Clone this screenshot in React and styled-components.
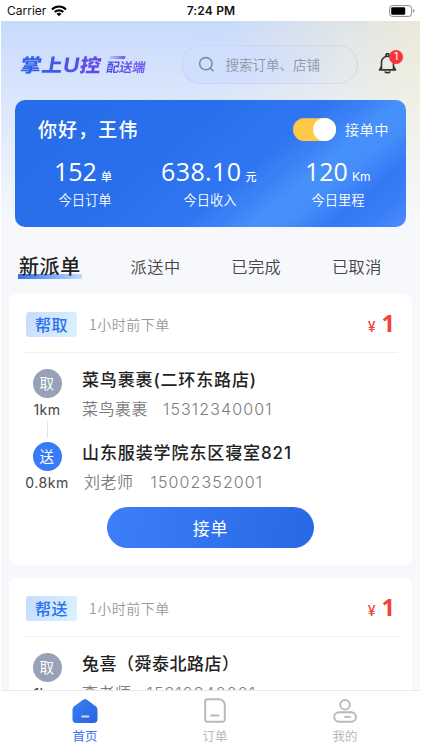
import React from 'react';
import styled, { createGlobalStyle, css } from 'styled-components';

const cjk = '"Noto Sans CJK SC", sans-serif';
const latin = 'Inter, "Noto Sans CJK SC", sans-serif';

const GlobalStyle = createGlobalStyle`
  * { box-sizing: border-box; }
  body { margin: 0; background: #fff; font-family: ${cjk}; overflow: hidden; }
  button { font: inherit; border: 0; padding: 0; background: none; }
`;

const Screen = styled.div`
  width: 422px; height: 750px; padding: 0 2px 0 1px;
  display: flex; flex-direction: column; overflow: hidden; background: #fff;
`;
const StatusBar = styled.header`
  height: 21px; flex: none; padding: 0 5px 0 6px;
  display: grid; grid-template-columns: 1fr auto 1fr; align-items: center;
  font: 400 12px/21px Inter, sans-serif; color: #111;
`;
const Carrier = styled.div`display: flex; align-items: center; gap: 5px; svg { display: block; }`;
const Clock = styled.div`font-weight: 600; letter-spacing: 0.18px;`;
const Battery = styled.svg`display: block; justify-self: end;`;

const Content = styled.main`
  flex: 1; min-height: 0; overflow: hidden; background:
    linear-gradient(180deg, rgba(246,248,251,0) 0, rgba(246,248,251,.1) 20px, rgba(246,248,251,.5) 95px, #f6f8fb 205px),
    linear-gradient(97deg, #c8dafd 0%, #c8dafc 45%, #e0e5e5 70%, #eeead3 88%, #efebd5 100%);
`;
const TopBar = styled.div`
  height: 79px; padding: 7px 14px 0 20px; display: flex; align-items: center;
`;
const Logo = styled.div`display: flex; width: 160px; height: 26px; align-items: center;`;
const gradientText = css`
  background: linear-gradient(90deg, ${p => p.$from}, ${p => p.$to});
  -webkit-background-clip: text; background-clip: text; color: transparent;
`;
const LogoName = styled.span`
  ${gradientText}
  flex: none; font-weight: 800; font-size: 18.5px; line-height: 26px; width: 75px;
  white-space: nowrap; transform: skewX(-10deg) scaleX(1.13); transform-origin: 0 50%; letter-spacing: .3px;
  b { font: 700 20px/20px Inter, sans-serif; }
`;
const LogoSide = styled.span`
  display: flex; flex-direction: column; transform: skewX(-10deg); margin-left: 11px;
`;
const LogoDash = styled.i`
  width: 16px; height: 3px; margin: 1px 0 0 1px;
  background: linear-gradient(90deg, #c2c9fb, #6c5af0);
`;
const LogoSub = styled.span`
  ${gradientText}
  font-weight: 700; font-size: 13px; line-height: 15px; white-space: nowrap;
`;
const Search = styled.div`
  width: 178px; height: 39px; border-radius: 20px; border: 1px solid rgba(185,195,220,.34);
  display: flex; align-items: center; padding-left: 16px; gap: 11px;
  background: linear-gradient(90deg, #cfdefd, rgba(207,222,253,.85) 35%, rgba(225,230,235,.15) 90%);
  color: #8d97a4; font-size: 13.5px; font-weight: 350; line-height: 20px;
`;
const BellBox = styled.div`
  margin-left: 20px; width: 28px; height: 30px; position: relative;
  svg { position: absolute; left: 0; top: 4px; }
`;
const Count = styled.span`
  position: absolute; left: 11px; top: 1px; width: 14px; height: 14px; border-radius: 50%;
  background: #fa3439; color: #fff; text-align: center; font: 400 10.5px/14px Inter, sans-serif;
`;

const Summary = styled.section`
  margin: 0 14px; height: 127px; border-radius: 10px; color: #fff; overflow: hidden;
  background: linear-gradient(140deg, #276de9 0%, #296fec 38%, #2f74f0 52%, #2f74f0 57%, #3b81f6 65%, #4690fa 71%, #468ffa 77%, #3478f5 86%, #397df7 92%, #4d8bfc 100%);
`;
const Greeting = styled.div`
  height: 41px; padding: 18px 17px 0 23px; display: flex; align-items: center;
`;
const Hello = styled.h1`margin: -2px 0 0; flex: 1; font-size: 19px; line-height: 22px; font-weight: 500; letter-spacing: 1.1px;`;
const Toggle = styled.span`
  width: 43px; height: 23px; border-radius: 12px; background: #fec849; margin-right: 9px;
  display: flex; justify-content: flex-end; align-items: center; box-shadow: inset 0 1px 1px #d2b66c;
  &::after { content: ''; width: 23px; height: 23px; border-radius: 50%; background: #fff; }
`;
const ToggleLabel = styled.span`font-size: 14.2px; line-height: 22px; letter-spacing: .5px; font-weight: 350; margin-top: -1px;`;
const Stats = styled.div`
  margin-top: 12px; display: grid; grid-template-columns: 131px 129px 130px;
`;
const Stat = styled.div`
  height: 60px; display: flex; flex-direction: column; padding-left: ${p => p.$pad}px; position: relative;
  & + &::before {
    content: ''; position: absolute; left: 0; top: 19px; width: 1px; height: 19px; background: rgba(255,255,255,.24);
  }
`;
const Figure = styled.div`
  height: 36px; display: flex; align-items: baseline; gap: 4px; line-height: 37px;
  font-family: "Open Sans", sans-serif; font-weight: 500; font-size: 25px; letter-spacing: ${p => p.$track || 0}px;
`;
const Unit = styled.span`font: ${p => (p.$latin ? '400 12px/20px Inter' : '500 11px/20px "Noto Sans CJK SC"')}, sans-serif; letter-spacing: 0;`;
const StatLabel = styled.div`
  font-size: 13.3px; line-height: 20px; font-weight: 350; width: 58px; text-align: center; white-space: nowrap;
  margin-left: ${p => p.$shift}px; margin-top: 1px;
`;

const Tabs = styled.nav`
  height: 67px; padding: 11px 38px 0 18px; display: flex; justify-content: space-between; align-items: center;
`;
const Tab = styled.button`
  color: #454545; font-size: 16.2px; line-height: 26px; letter-spacing: .5px; font-weight: 350;
  ${p => p.$active && css`
    font-size: 20px; font-weight: 500; color: #222; width: 64px; text-align: left; margin: 0 -2px 0 -1px; padding-left: 1px; letter-spacing: .6px;
    background: linear-gradient(90deg, #3470ec, #79a6f8 50%, #c6dafa) 0 21px / 64px 5px no-repeat;
  `}
`;

const Card = styled.article`
  margin: 0 8px 13.5px; height: 270.5px; border-radius: 8px; background: #fff; padding: 0 14px 0 15px;
`;
const CardHead = styled.div`
  height: 59px; border-bottom: 1px solid #f0f0f2; padding: 3px 3px 0 2px; display: flex; align-items: center;
`;
const Tag = styled.span`
  width: 51px; height: 25px; border-radius: 3px; text-align: center; color: #2b73ee; font-size: 16px; line-height: 24px; font-weight: 500; letter-spacing: .4px;
  background: linear-gradient(110deg, #c8dcfd, #dbf2fe);
`;
const Ago = styled.span`margin: -1px 0 0 12px; flex: 1; color: #999; font-size: 14px; font-weight: 350; letter-spacing: .5px; line-height: 22px;`;
const Price = styled.span`
  display: flex; align-items: baseline; gap: 6px; color: #f0443d; font: 700 23.5px/28px "Noto Sans", sans-serif; margin-top: -4px;
  small { font: 500 14px/20px Inter, sans-serif; }
`;
const Stop = styled.div`
  height: ${p => (p.$last ? 72 : 73)}px; display: grid; grid-template-columns: 58px 1fr;
`;
const Marker = styled.div`
  width: 46px; display: flex; flex-direction: column; align-items: center;
  font: 400 14px/18px Inter, sans-serif; color: #444; padding-top: 16px; white-space: nowrap; letter-spacing: .5px;
`;
const Dot = styled.span`
  width: 29px; height: 29px; flex: none; border-radius: 50%; background: ${p => (p.$drop ? '#397bf7' : '#97a2b8')};
  color: #fff; font: 400 14.5px/28px ${cjk}; text-align: center; margin-bottom: 3px;
`;
const Link = styled.i`width: 1px; height: 17px; flex: none; background: #e4e4e8; margin-top: 2px;`;
const Place = styled.div`padding-top: 14px; white-space: nowrap;`;
const PlaceName = styled.h2`
  margin: 0; color: #222; font: 500 17px/27px ${latin}; letter-spacing: ${p => p.$track}px;
`;
const Contact = styled.p`
  margin: 2px 0 0 ${p => p.$indent || 0}px; color: #7c7c7c; font: 350 16px/26px ${latin}; display: flex; gap: ${p => p.$gap}px; letter-spacing: .5px;
`;
const Phone = styled.span`font: 300 16px/26px Inter, sans-serif; letter-spacing: 1.12px;`;
const Accept = styled.button`
  display: block; margin: 9px 0 0 83px; width: 207px; height: 41px; border-radius: 21px; color: #fff;
  background: linear-gradient(100deg, #3c7ff9, #2768e5); font-size: 17px; line-height: 40px; letter-spacing: .8px;
`;

const TabBar = styled.footer`
  height: 60px; flex: none; border-top: 1px solid #e9e9ec; background: #fff;
  display: grid; grid-template-columns: 168px 92px 168px;
`;
const TabItem = styled.div`
  display: flex; flex-direction: column; align-items: center; padding-top: 7px;
  color: ${p => (p.$active ? '#3474ef' : '#b8b8bb')}; font-size: 12.4px; line-height: 20px;
  svg { display: block; margin-bottom: 2px; }
`;

const Wifi = () => (
  <svg width="16" height="12" viewBox="0 0 16 12" fill="none" stroke="#000" strokeWidth="2.1">
    <path d="M1 4.4a10 10 0 0 1 14 0M3.7 7.1a6.2 6.2 0 0 1 8.6 0" />
    <path d="M8 11.3 5.5 8.8a3.7 3.7 0 0 1 5 0z" fill="#000" stroke="none" />
  </svg>
);
const Bell = () => (
  <svg width="19" height="21" viewBox="0 0 19 21" fill="none" stroke="#333" strokeWidth="1.6" strokeLinejoin="round" strokeLinecap="round">
    <path d="M1.5 16.9h16M3.5 16.5V9.3a6 6 0 0 1 12 0v7.2M3.5 13.5 1.6 16.8M15.5 13.5l1.9 3.3" />
    <path d="M8 3.1V1.8a1.6 1.6 0 0 1 3.1 0v1.3M7.2 19q2.3 1.5 4.6 0" />
  </svg>
);
const HomeIcon = () => (
  <svg width="26" height="26" viewBox="0 0 26 26">
    <defs><linearGradient id="home" x2="1" y2="1"><stop stopColor="#3b7df7" /><stop offset="1" stopColor="#2667e1" /></linearGradient></defs>
    <path d="M11.1 1.7q1.9-1.4 3.8 0l8.8 6.5q1.8 1.4 1.8 3.5v9.6q0 3.7-3.7 3.7H4.2Q.5 25 .5 21.300V11.700q0-2.100 1.800-3.500z" fill="url(#home)" />
    <rect x="9.300" y="17.500" width="8" height="2" rx=".7" fill="#d9d9d9" />
  </svg>
);
const OrderIcon = () => (
  <svg width="26" height="26" viewBox="0 0 26 26" fill="none" stroke="#b9b9bc" strokeWidth="2">
    <path d="M5.500 1.200h11.300a6 6 0 0 1 6 6v14.300a2.300 2.300 0 0 1-2.300 2.300h-15a2.300 2.300 0 0 1-2.300-2.300V3.500a2.300 2.300 0 0 1 2.300-2.300zM8.500 17.400h8.700" />
  </svg>
);
const MineIcon = () => (
  <svg width="26" height="26" viewBox="0 0 26 26" fill="none" stroke="#b9b9bc" strokeWidth="1.900">
    <circle cx="13" cy="6.800" r="4.800" /><rect x="2.200" y="14.200" width="21.800" height="9.600" rx="4.800" /><path d="M12.300 18.900h6.300" />
  </svg>
);

const orders = [
  {
    kind: '帮取',
    from: { name: '菜鸟裹裹(二环东路店)', person: '菜鸟裹裹', phone: '15312340001', far: '1km', track: 0.85, gap: 15 },
    to: { name: '山东服装学院东区寝室821', person: '刘老师', phone: '15002352001', far: '0.8km', track: 0.9, gap: 17 },
  },
  {
    kind: '帮送',
    from: { name: '兔喜（舜泰北路店）', person: '李老师', phone: '15312340001', far: '1km', track: 0.5, gap: 15 },
  },
];

function StopRow({ stop, drop }) {
  return (
    <Stop $last={drop}>
      <Marker><Dot $drop={drop}>{drop ? '送' : '取'}</Dot>{stop.far}{!drop && <Link />}</Marker>
      <Place>
        <PlaceName $track={stop.track}>{stop.name}</PlaceName>
        <Contact $indent={drop ? 2 : 0} $gap={stop.gap}><span>{stop.person}</span><Phone>{stop.phone}</Phone></Contact>
      </Place>
    </Stop>
  );
}

function OrderCard({ order }) {
  return (
    <Card>
      <CardHead><Tag>{order.kind}</Tag><Ago>1小时前下单</Ago><Price><small>¥</small>1</Price></CardHead>
      <StopRow stop={order.from} />
      {order.to && (
        <>
          <StopRow stop={order.to} drop />
          <Accept>接单</Accept>
        </>
      )}
    </Card>
  );
}

export default function App() {
  return (
    <>
      <GlobalStyle />
      <Screen>
        <StatusBar>
          <Carrier>Carrier <Wifi /></Carrier>
          <Clock>7:24 PM</Clock>
          <Battery width="26" height="12" viewBox="0 0 26 12">
            <rect x=".6" y=".6" width="22" height="10.800" rx="2.800" fill="none" stroke="#888" />
            <rect x="2.200" y="2.200" width="14" height="7.600" rx="1.400" /><path d="M24.200 4v4q1.300-.5 1.300-2t-1.300-2" fill="#888" />
          </Battery>
        </StatusBar>
        <Content>
          <TopBar>
            <Logo>
              <LogoName $from="#2a66e8" $to="#6a45ea">掌上<b>U</b>控</LogoName>
              <LogoSide><LogoDash /><LogoSub $from="#4b50e4" $to="#7459f0">配送端</LogoSub></LogoSide>
            </Logo>
            <Search>
              <svg width="17" height="17" viewBox="0 0 17 17" fill="none" stroke="#7c8798" strokeWidth="1.500"><circle cx="7.800" cy="7.600" r="6.200" /><path d="m12.200 12 3.300 3.300" /></svg>
              搜索订单、店铺
            </Search>
            <BellBox><Bell /><Count>1</Count></BellBox>
          </TopBar>
          <Summary>
            <Greeting><Hello>你好，王伟</Hello><Toggle /><ToggleLabel>接单中</ToggleLabel></Greeting>
            <Stats>
              <Stat $pad={39}><Figure>152<Unit>单</Unit></Figure><StatLabel $shift={2}>今日订单</StatLabel></Stat>
              <Stat $pad={15}><Figure $track={0.4}>638.10<Unit>元</Unit></Figure><StatLabel $shift={20}>今日收入</StatLabel></Stat>
              <Stat $pad={30}><Figure>120<Unit $latin>Km</Unit></Figure><StatLabel $shift={4}>今日里程</StatLabel></Stat>
            </Stats>
          </Summary>
          <Tabs><Tab $active>新派单</Tab><Tab>派送中</Tab><Tab>已完成</Tab><Tab>已取消</Tab></Tabs>
          {orders.map(o => <OrderCard key={o.kind} order={o} />)}
        </Content>
        <TabBar>
          <TabItem $active><HomeIcon />首页</TabItem>
          <TabItem><OrderIcon />订单</TabItem>
          <TabItem><MineIcon />我的</TabItem>
        </TabBar>
      </Screen>
    </>
  );
}
